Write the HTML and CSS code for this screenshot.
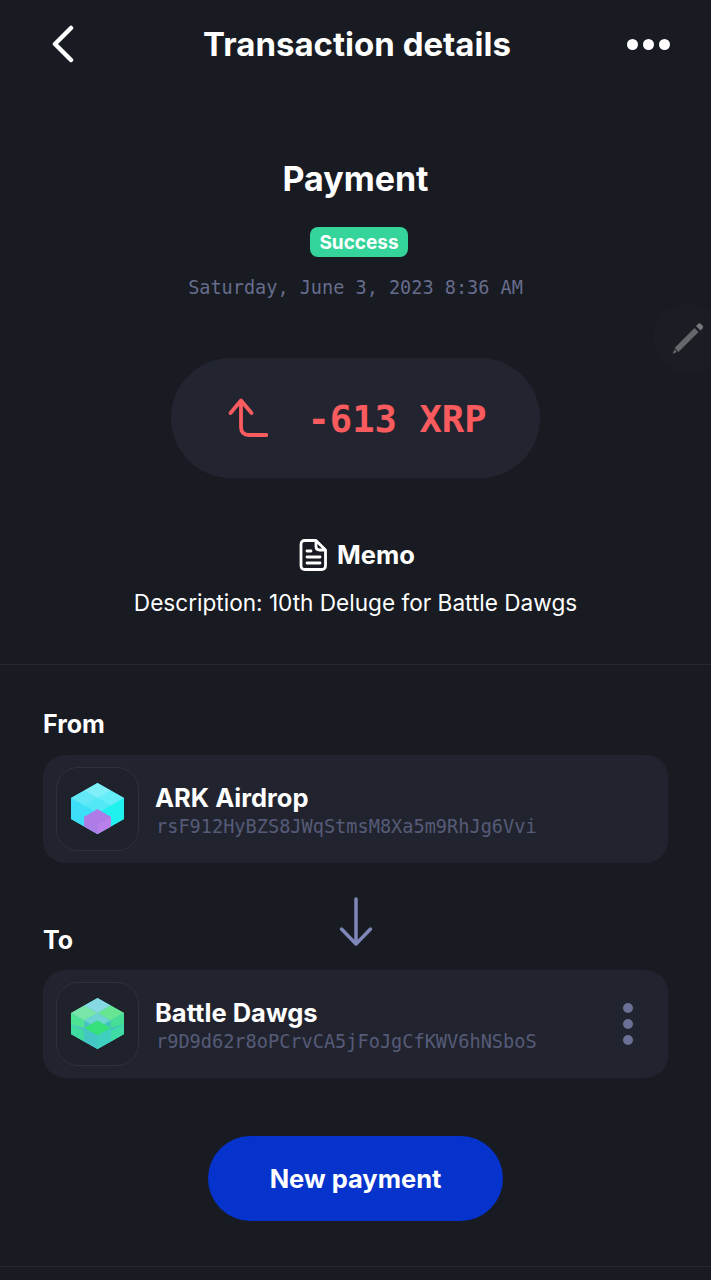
FILE: index.html
```html
<!DOCTYPE html>
<html lang="en">
<head>
    <meta charset="UTF-8">
    <meta name="viewport" content="width=device-width, initial-scale=1.0">
    <title>Transaction details</title>
    <link rel="stylesheet" href="styles.css">
</head>
<body>
    <header class="topbar">
        <button class="icon-btn" aria-label="Back">
            <svg width="24" height="38" viewBox="0 0 24 38"><path d="M20 3 L4 19 L20 35" fill="none" stroke="#fff" stroke-width="4.500" stroke-linecap="round" stroke-linejoin="round"/></svg>
        </button>
        <h1>Transaction details</h1>
        <div class="dots" aria-label="More">
            <span></span><span></span><span></span>
        </div>
    </header>

    <section class="summary">
        <h2>Payment</h2>
        <span class="badge">Success</span>
        <p class="date">Saturday, June 3, 2023 8:36 AM</p>
        <div class="amount">
            <svg width="40" height="40" viewBox="0 0 40 40"><path d="M2.500 15 L13 2.500 L23.500 15 M13 3 L13 29 Q13 37 21 37 L38.500 37" fill="none" stroke="#f95b5e" stroke-width="3.800" stroke-linecap="round" stroke-linejoin="round"/></svg>
            <span>-613 XRP</span>
        </div>
        <div class="memo-title">
            <svg width="28" height="32" viewBox="0 0 28 32"><path d="M6 1.500 H17 L26.500 11 V26.500 Q26.500 30.500 22.500 30.500 H6 Q2 30.500 2 26.500 V5.500 Q2 1.500 6 1.500 Z M17 2 V7.500 Q17 11 20.500 11 H26" fill="none" stroke="#fff" stroke-width="2.800" stroke-linejoin="round"/><path d="M8 12 H12 M8 18 H21 M8 24 H21" fill="none" stroke="#fff" stroke-width="2.800" stroke-linecap="round"/></svg>
            <span>Memo</span>
        </div>
        <p class="memo-text">Description: 10th Deluge for Battle Dawgs</p>
    </section>

    <div class="edit-fab">
        <svg width="36" height="36" viewBox="0 0 36 36"><path d="M4.500 28 L24.500 8 L28.500 12 L8.500 32 Z" fill="#66676b"/><path d="M2.500 34 L4.500 29.500 L7 32 Z" fill="#66676b"/><path d="M26 6 L28 4 Q29.500 2.500 31 4 L32.500 5.500 Q34 7 32.500 8.500 L30.500 10.500 Z" fill="#77787b"/></svg>
    </div>

    <section class="parties">
        <h3 class="label from-label">From</h3>
        <div class="account">
            <div class="avatar">
                <svg width="54" height="54" viewBox="7 6 54 54">
                    <polygon points="33.500,7 60,22 60,43 33.500,58 7,43 7,22" fill="#4fe4f6"/>
                    <polygon points="33.500,7 46.750,14.500 33.500,22 20.250,14.500" fill="#80eff9"/>
                    <polygon points="20.250,14.500 33.500,22 20.250,29.500 7,22" fill="#62e8f6"/>
                    <polygon points="46.750,14.500 60,22 46.750,29.500 33.500,22" fill="#66eef8"/>
                    <polygon points="33.500,22 46.750,29.500 33.500,37 20.250,29.500" fill="#52e8f5"/>
                    <polygon points="7,22 33.500,37 33.500,58 7,43" fill="#3cdef8"/>
                    <polygon points="60,22 33.500,37 33.500,58 60,43" fill="#1ff2ee"/>
                    <polygon points="33.500,33 47,41 47,50.500 33.500,58 20,50.500 20,41" fill="#ae7ce6"/>
                    <polygon points="47,41 33.500,49 33.500,58 47,50.500" fill="#b880ea"/>
                </svg>
            </div>
            <div class="account-info">
                <div class="account-name">ARK Airdrop</div>
                <div class="account-addr">rsF912HyBZS8JWqStmsM8Xa5m9RhJg6Vvi</div>
            </div>
        </div>

        <div class="to-row">
            <h3 class="label">To</h3>
            <svg class="down-arrow" width="34" height="50" viewBox="0 0 34 50"><path d="M17 2 V47 M2.500 32 L17 47 L31.500 32" fill="none" stroke="#7f86b8" stroke-width="3.500" stroke-linecap="round" stroke-linejoin="round"/></svg>
        </div>

        <div class="account">
            <div class="avatar">
                <svg width="54" height="54" viewBox="7 6 54 54">
                    <polygon points="33.500,7 60,22 60,43 33.500,58 7,43 7,22" fill="#4bc3c6"/>
                    <polygon points="33.500,7 46.750,14.500 33.500,22 20.250,14.500" fill="#86d8e2"/>
                    <polygon points="20.250,14.500 33.500,22 20.250,29.500 7,22" fill="#78e6a8"/>
                    <polygon points="46.750,14.500 60,22 46.750,29.500 33.500,22" fill="#66e692"/>
                    <polygon points="33.500,22 46.750,29.500 33.500,37 20.250,29.500" fill="#6cd4d2"/>
                    <polygon points="7,22 33.500,37 33.500,58 7,43" fill="#4bc3c6"/>
                    <polygon points="60,22 33.500,37 33.500,58 60,43" fill="#3fc4b8"/>
                    <polygon points="7,22 20.250,29.500 20.250,37 7,33" fill="#4fe394"/>
                    <polygon points="60,22 46.750,29.500 46.750,37 60,33" fill="#46dd96"/>
                    <polygon points="33.500,29.500 47,37 33.500,44.500 20,37" fill="#36e07a"/>
                    <polygon points="7,33 20,40 20,50.500 7,43" fill="#3fdca0"/>
                    <polygon points="60,33 47,40 47,50.500 60,43" fill="#3fdca6"/>
                    <polygon points="20,37 33.500,44.500 33.500,58 20,50.500" fill="#44c6c4"/>
                    <polygon points="47,37 33.500,44.500 33.500,58 47,50.500" fill="#3fd0c0"/>
                </svg>
            </div>
            <div class="account-info">
                <div class="account-name">Battle Dawgs</div>
                <div class="account-addr">r9D9d62r8oPCrvCA5jFoJgCfKWV6hNSboS</div>
            </div>
            <div class="kebab"><span></span><span></span><span></span></div>
        </div>

        <div class="actions">
            <button class="primary-btn">New payment</button>
        </div>
    </section>
</body>
</html>
```

FILE: styles.css
```css
* {
    box-sizing: border-box;
}

html, body {
    height: 1280px;
}

body {
    font-family: 'Inter', 'Lato', sans-serif;
    background-color: #181b22;
    color: #fff;
    margin: 0;
    position: relative;
    overflow: hidden;
}

h1, h2, h3, p {
    margin: 0;
}

.topbar {
    display: flex;
    align-items: center;
    justify-content: space-between;
    height: 88px;
    padding: 0 41px 0 51px;
}

.topbar h1 {
    font-size: 33px;
    font-weight: 700;
    line-height: 42px;
    margin-left: 12px;
}

.icon-btn {
    background: none;
    border: none;
    padding: 0;
    display: flex;
}

.dots {
    display: flex;
    gap: 5px;
}

.dots span {
    width: 11px;
    height: 11px;
    border-radius: 50%;
    background-color: #fff;
}

.summary {
    display: flex;
    flex-direction: column;
    align-items: center;
    padding-top: 69px;
    height: 577px;
    border-bottom: 1px solid #262933;
}

.summary h2 {
    font-size: 34px;
    font-weight: 700;
    line-height: 44px;
}

.badge {
    margin-top: 26px;
    margin-left: 7px;
    height: 30px;
    padding: 0 9px;
    border-radius: 8px;
    background-color: #35d49a;
    font-size: 19px;
    font-weight: 700;
    line-height: 32px;
}

.date {
    margin-top: 17px;
    font-family: 'DejaVu Sans Mono', monospace;
    font-size: 18.550px;
    line-height: 28px;
    color: #676c8c;
}

.amount {
    margin-top: 56px;
    width: 369px;
    height: 120px;
    padding-left: 4px;
    border-radius: 60px;
    background-color: #22252f;
    display: flex;
    align-items: center;
    justify-content: center;
    gap: 39px;
    color: #f95b5e;
    font-family: 'DejaVu Sans Mono', monospace;
    font-size: 37.200px;
    font-weight: bold;
}

.amount span {
    position: relative;
    top: 1px;
}

.memo-title {
    margin-top: 60px;
    padding-left: 3px;
    display: flex;
    align-items: center;
    gap: 10px;
    font-size: 25.500px;
    font-weight: 700;
    line-height: 33px;
}

.memo-text {
    margin-top: 16px;
    font-size: 22.600px;
    line-height: 32px;
}

.parties {
    padding: 43px 43px 0;
}

.label {
    font-size: 25px;
    font-weight: 700;
    line-height: 32px;
}

.from-label {
    margin-bottom: 15px;
}

.account {
    display: flex;
    align-items: center;
    gap: 17px;
    height: 108px;
    padding: 0 35px 0 13px;
    border-radius: 22px;
    background-color: #21242e;
}

.avatar {
    width: 83px;
    height: 84px;
    border: 1px solid #2e313d;
    border-radius: 22px;
    background-color: #1f222b;
    display: flex;
    align-items: center;
    justify-content: center;
    flex-shrink: 0;
}

.account-info {
    flex: 1;
    min-width: 0;
}

.account-name {
    font-size: 25.500px;
    font-weight: 700;
    line-height: 32px;
    padding-top: 3px;
    margin-left: -1px;
}

.account-addr {
    font-family: 'DejaVu Sans Mono', monospace;
    font-size: 18.600px;
    line-height: 26px;
    color: #565b78;
}

.to-row {
    display: grid;
    grid-template-columns: 1fr auto 1fr;
    align-items: end;
    height: 107px;
    padding-bottom: 14px;
}

.down-arrow {
    margin-bottom: 9px;
}

.kebab {
    display: flex;
    flex-direction: column;
    gap: 6px;
}

.kebab span {
    width: 10px;
    height: 10px;
    border-radius: 50%;
    background-color: #6a7096;
}

.actions {
    display: flex;
    justify-content: center;
    padding-top: 58px;
}

.primary-btn {
    width: 295px;
    height: 85px;
    border: none;
    border-radius: 43px;
    background-color: #0533cc;
    color: #fff;
    font-family: inherit;
    font-size: 25.500px;
    font-weight: 700;
}

/* bottom hairline */
body::after {
    content: "";
    position: absolute;
    left: 0;
    right: 0;
    top: 1266px;
    height: 1px;
    background-color: #262933;
}

.edit-fab {
    position: absolute;
    left: 653px;
    top: 303px;
    width: 70px;
    height: 70px;
    border-radius: 50%;
    background-color: #1b1d24;
    display: flex;
    align-items: center;
    justify-content: flex-start;
    padding-left: 17px;
}
```
